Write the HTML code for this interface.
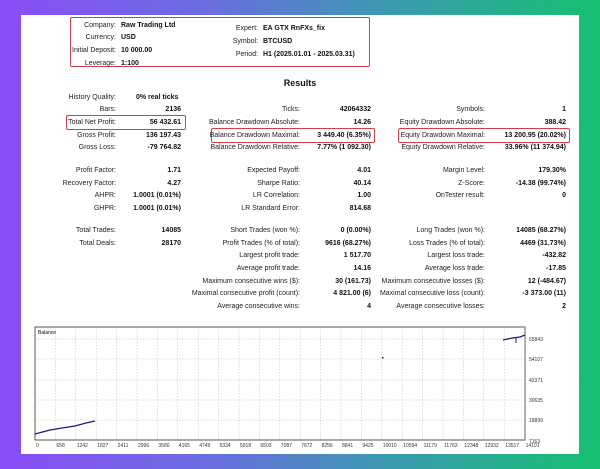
<!DOCTYPE html><html><head><style>
body{margin:0;width:600px;height:469px;overflow:hidden;background:linear-gradient(90deg,#8a4cf6 0%,#6a6ee0 35%,#3a9ab0 65%,#15c070 100%);font-family:"Liberation Sans",sans-serif;}
.p{position:absolute;left:21px;top:15px;width:558px;height:439px;background:#fff;}
.t{position:absolute;font-size:7px;color:#222;white-space:nowrap;line-height:9px}
.l{text-align:right}
.b{font-weight:bold;color:#111}
.box{position:absolute;border:1.5px solid #d0404a;border-radius:2px}
</style></head><body>
<div class="p"></div>
<div class="box" style="left:70px;top:17px;width:298px;height:48px"></div>
<div class="box" style="left:66px;top:115px;width:118px;height:13px"></div>
<div class="box" style="left:211px;top:128px;width:162px;height:13px"></div>
<div class="box" style="left:398px;top:128px;width:170px;height:13px"></div>
<div id="c"></div>
<div class="t b" style="left:0;width:600px;text-align:center;top:79px;font-size:9px">Results</div>
<svg style="position:absolute;left:0;top:0" width="600" height="469">
<rect x="35" y="327" width="490" height="113" fill="#fff" stroke="#555" stroke-width="1"/>
<g stroke="#bbb" stroke-width="0.5" stroke-dasharray="1.5,1.5">
<line x1="35" y1="339" x2="525" y2="339"/><line x1="35" y1="359" x2="525" y2="359"/><line x1="35" y1="380" x2="525" y2="380"/><line x1="35" y1="400" x2="525" y2="400"/><line x1="35" y1="420" x2="525" y2="420"/>
</g>
<g id="vg" stroke="#bbb" stroke-width="0.5" stroke-dasharray="1.5,1.5"></g>
<polyline points="35,434 50,430 62,428 75,426 86,423 95,421" fill="none" stroke="#1a1a8a" stroke-width="1.3"/>
<polyline points="503,340 512,338 520,337 525,335" fill="none" stroke="#1a1a8a" stroke-width="1.3"/>
<line x1="516" y1="337" x2="516" y2="343" stroke="#1a1a8a"/>
<rect x="382" y="357" width="1.5" height="1.5" fill="#1a1a8a"/>
<text x="38" y="334" font-size="5" font-family="Liberation Sans">Balance</text>
<g font-size="5" font-family="Liberation Sans" fill="#333">
<text x="529" y="341">65843</text><text x="529" y="361">54107</text><text x="529" y="382">42371</text><text x="529" y="402">30635</text><text x="529" y="422">18899</text><text x="529" y="443">7163</text>
</g>
<g id="xl" font-size="5" font-family="Liberation Sans" fill="#333"></g>
</svg>
<script>
var c=document.getElementById('c'),h='';
function L(r,y,t,bold){h+='<div class="t l" style="left:0;width:'+r+'px;top:'+y+'px">'+t+'</div>';}
function V(r,y,t){h+='<div class="t l b" style="left:0;width:'+r+'px;top:'+y+'px">'+t+'</div>';}
function A(x,y,t){h+='<div class="t b" style="left:'+x+'px;top:'+y+'px">'+t+'</div>';}
var hd=[['Company:','Raw Trading Ltd',21],['Currency:','USD',33],['Initial Deposit:','10 000.00',46],['Leverage:','1:100',59]];
hd.forEach(function(a){L(116,a[2],a[0]);A(121,a[2],a[1]);});
[['Expert:','EA GTX RnFXs_fix',24],['Symbol:','BTCUSD',37],['Period:','H1 (2025.01.01 - 2025.03.31)',50]].forEach(function(a){L(258,a[2],a[0]);A(263,a[2],a[1]);});
L(116,93,'History Quality:');A(136,93,'0% real ticks');
var rows=[
[105,'Bars:','2136','Ticks:','42064332','Symbols:','1'],
[118,'Total Net Profit:','56 432.61','Balance Drawdown Absolute:','14.26','Equity Drawdown Absolute:','388.42'],
[131,'Gross Profit:','136 197.43','Balance Drawdown Maximal:','3 449.40 (6.35%)','Equity Drawdown Maximal:','13 200.95 (20.02%)'],
[143,'Gross Loss:','-79 764.82','Balance Drawdown Relative:','7.77% (1 092.30)','Equity Drawdown Relative:','33.96% (11 374.94)'],
[166,'Profit Factor:','1.71','Expected Payoff:','4.01','Margin Level:','179.30%'],
[179,'Recovery Factor:','4.27','Sharpe Ratio:','40.14','Z-Score:','-14.38 (99.74%)'],
[191,'AHPR:','1.0001 (0.01%)','LR Correlation:','1.00','OnTester result:','0'],
[204,'GHPR:','1.0001 (0.01%)','LR Standard Error:','814.68','',''],
[226,'Total Trades:','14085','Short Trades (won %):','0 (0.00%)','Long Trades (won %):','14085 (68.27%)'],
[239,'Total Deals:','28170','Profit Trades (% of total):','9616 (68.27%)','Loss Trades (% of total):','4469 (31.73%)'],
[251,'','','Largest profit trade:','1 517.70','Largest loss trade:','-432.82'],
[264,'','','Average profit trade:','14.16','Average loss trade:','-17.85'],
[277,'','','Maximum consecutive wins ($):','30 (161.73)','Maximum consecutive losses ($):','12 (-484.67)'],
[289,'','','Maximal consecutive profit (count):','4 821.00 (6)','Maximal consecutive loss (count):','-3 373.00 (11)'],
[302,'','','Average consecutive wins:','4','Average consecutive losses:','2']];
rows.forEach(function(r){var y=r[0];L(116,y,r[1]);V(181,y,r[2]);L(300,y,r[3]);V(371,y,r[4]);L(485,y,r[5]);V(566,y,r[6]);});
c.innerHTML=h;
var xs=['0','658','1242','1827','2411','2996','3580','4165','4749','5334','5918','6503','7087','7672','8256','8841','9425','10010','10594','11179','11763','12348','12932','13517','14101'];
var vg='',xl='';
for(var i=0;i<xs.length;i++){var x=35+i*20.4;if(i>0)vg+='<line x1="'+x+'" y1="327" x2="'+x+'" y2="440"/>';xl+='<text x="'+(x+1)+'" y="447">'+xs[i]+'</text>';}
document.getElementById('vg').innerHTML=vg;document.getElementById('xl').innerHTML=xl;
</script>
</body></html>
